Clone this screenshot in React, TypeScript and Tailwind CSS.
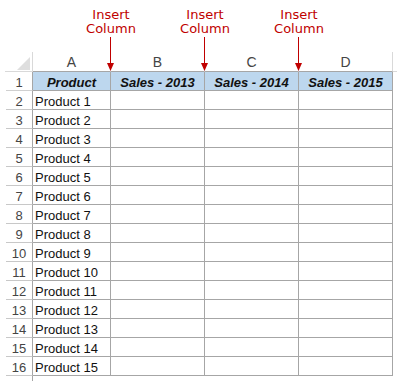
const products = Array.from({ length: 15 }, (_, i) => `Product ${i + 1}`);
const arrows = [110, 204, 298];

function Arrow({ x }: { x: number }) {
  return (
    <>
      <div
        className="absolute top-[8px] w-[64px] text-center text-[13px] leading-[14px] text-[#c00000]"
        style={{ left: x - 31, fontFamily: '"DejaVu Sans", sans-serif' }}
      >
        <div>Insert</div>
        <div>Column</div>
      </div>
      <svg className="absolute top-[37px]" style={{ left: x - 4 }} width="9" height="35" viewBox="0 0 9 35">
        <line x1="4.5" y1="0" x2="4.5" y2="28" stroke="#c00000" strokeWidth="1" />
        <polygon points="1,26 8,26 4.5,34" fill="#c00000" />
      </svg>
    </>
  );
}

export default function App() {
  return (
    <div className="relative h-[381px] w-[397px] overflow-hidden bg-white font-['Liberation_Sans',Arial,sans-serif]">
      <div className="pt-[52px]">
        {/* column letters */}
        <div className="grid h-[20px] grid-cols-[33px_78px_94px_94px_94px_1fr] text-[14px] leading-[14px] text-[#444]">
          <div className="relative pl-[5px]">
            <div className="h-[20px] border-r border-b border-[#d9d9d9]" />
            <svg className="absolute left-[17px] top-[5px]" width="13" height="13" viewBox="0 0 13 13">
              <polygon points="13,0 13,13 0,13" fill="#dedede" />
            </svg>
          </div>
          {["A", "B", "C", "D"].map((l) => (
            <div key={l} className="h-[20px] border-r border-b border-r-[#d9d9d9] border-b-[#a6a6a6] pt-[3px] text-center">
              {l}
            </div>
          ))}
          <div className="h-[20px] border-b border-[#d9d9d9]" />
        </div>

        {/* header row */}
        <div className="grid h-[19px] grid-cols-[33px_78px_94px_94px_94px_1fr] text-[13px] leading-[13px]">
          <div className="pl-[6px]">
            <div className="h-[19px] border-r border-b border-r-[#a6a6a6] border-b-[#d0d0d0] pt-[4px] text-center text-[#444]">1</div>
          </div>
          {["Product", "Sales - 2013", "Sales - 2014", "Sales - 2015"].map((h) => (
            <div key={h} className="h-[19px] border-r border-b border-[#a6a6a6] bg-[#bdd7ee] pt-[4px] text-center font-bold italic text-[#111]">
              {h}
            </div>
          ))}
          <div />
        </div>

        {products.map((p, i) => (
          <div key={p} className="grid h-[19px] grid-cols-[33px_78px_94px_94px_94px_1fr] text-[13px] leading-[13px]">
            <div className="pl-[6px]">
              <div className="h-[19px] border-r border-b border-r-[#a6a6a6] border-b-[#c8c8c8] pt-[4px] text-center text-[#444]">{i + 2}</div>
            </div>
            <div className="h-[19px] border-r border-b border-[#a6a6a6] pl-[2px] pt-[4px] text-[#111]">{p}</div>
            <div className="h-[19px] border-r border-b border-[#a6a6a6]" />
            <div className="h-[19px] border-r border-b border-[#a6a6a6]" />
            <div className="h-[19px] border-r border-b border-[#a6a6a6]" />
            <div />
          </div>
        ))}

        <div className="grid h-[19px] grid-cols-[33px_78px_94px_94px_94px_1fr] text-[13px] leading-[13px]">
          <div className="pl-[6px]">
            <div className="h-[19px] border-r border-[#a6a6a6] pt-[4px] text-center text-[#444]">17</div>
          </div>
        </div>
      </div>

      {arrows.map((x) => (
        <Arrow key={x} x={x} />
      ))}
    </div>
  );
}
